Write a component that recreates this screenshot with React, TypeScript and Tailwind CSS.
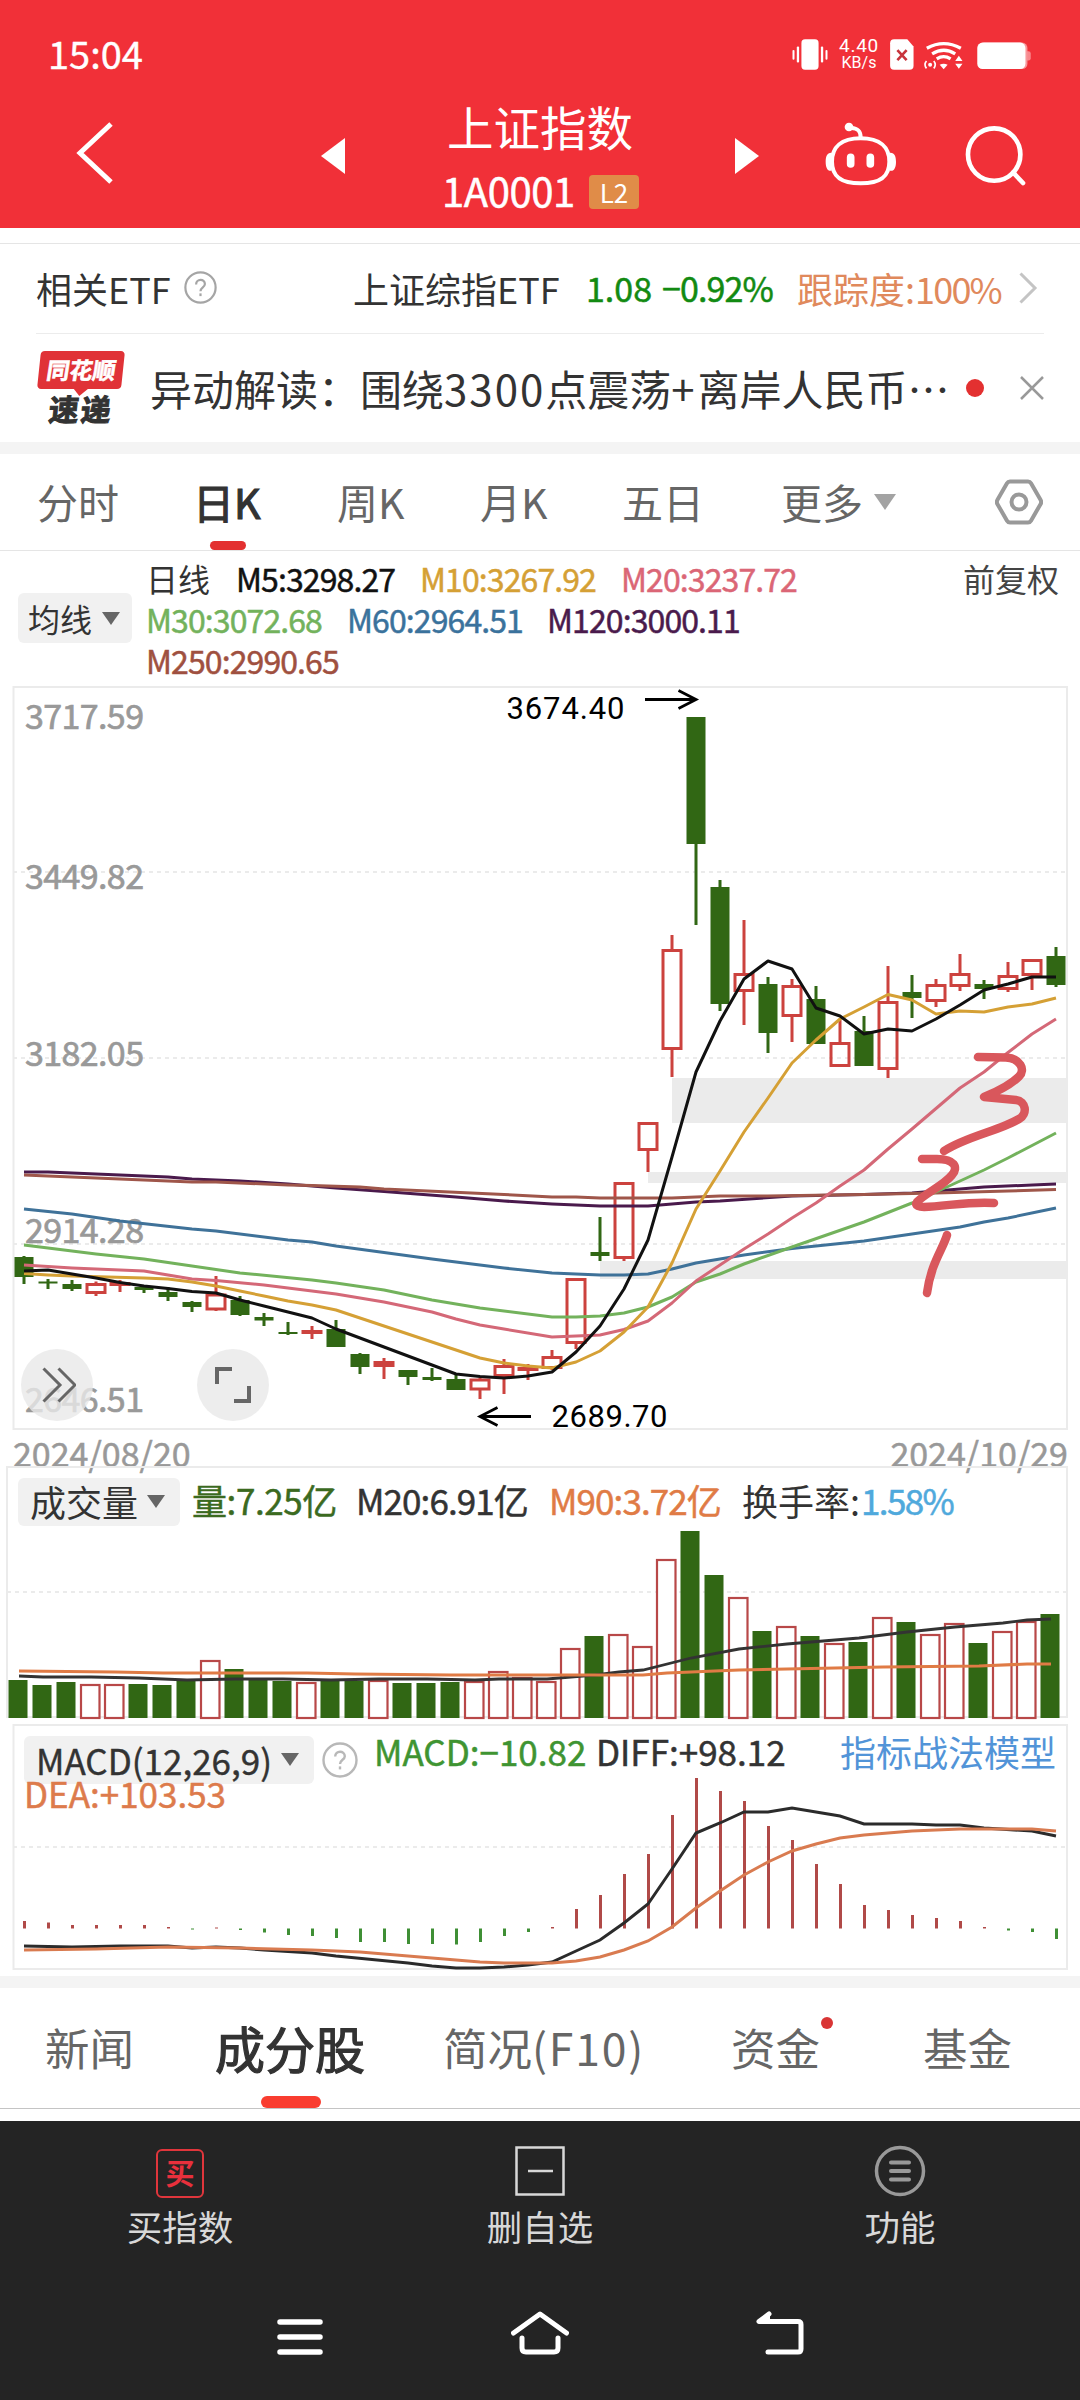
import type { ReactNode } from 'react';
import clsx from 'clsx';

type Candle = [kind: 'up' | 'down', top: number, bottom: number, high: number, low: number];
type Point = [index: number, y: number];

const UP = '#cc423e';
const DOWN = '#316714';
const STEP = 24;

const candles: Candle[] = [
    ['down', 1257, 1277, 1256, 1284],
    ['down', 1281.5, 1283.5, 1279, 1289],
    ['down', 1284, 1289, 1280, 1291],
    ['up', 1283, 1294, 1281.5, 1296],
    ['up', 1282, 1285, 1280, 1292],
    ['down', 1287, 1290, 1286, 1293],
    ['down', 1292, 1297, 1287, 1301],
    ['down', 1302, 1307, 1301, 1312],
    ['up', 1293.5, 1310.5, 1276, 1311],
    ['down', 1300, 1315, 1296, 1316],
    ['down', 1317, 1320.5, 1313, 1326],
    ['down', 1332, 1334, 1322, 1335],
    ['up', 1330, 1334, 1326, 1339],
    ['down', 1329, 1347, 1320, 1347],
    ['down', 1354, 1367, 1353, 1374],
    ['up', 1361, 1367, 1358, 1379],
    ['down', 1370, 1377, 1370, 1385],
    ['down', 1377, 1380, 1368, 1381],
    ['down', 1379, 1390, 1374, 1390],
    ['up', 1378.5, 1390.5, 1378, 1399],
    ['up', 1365, 1377, 1359, 1394],
    ['up', 1367, 1370, 1364, 1380],
    ['up', 1356, 1369, 1350, 1370],
    ['up', 1278, 1344, 1278, 1349],
    ['down', 1252, 1256, 1217, 1261],
    ['up', 1182, 1259, 1182, 1261],
    ['up', 1122, 1151, 1122, 1172],
    ['up', 949, 1050, 935, 1077],
    ['down', 717, 844, 717, 925],
    ['down', 887, 1004, 880, 1011],
    ['up', 973, 992, 920, 1025],
    ['down', 984, 1033, 977, 1053],
    ['up', 985, 1017, 979, 1042],
    ['down', 999, 1044, 986, 1044],
    ['up', 1042, 1067, 1020, 1067],
    ['down', 1031, 1066, 1016, 1066],
    ['up', 1001, 1070, 966, 1078],
    ['down', 992, 998, 975, 1018],
    ['up', 984, 1002, 979, 1007],
    ['up', 973, 987, 954, 991],
    ['down', 984, 989, 980, 999],
    ['up', 975, 990, 962, 992],
    ['up', 959, 976, 959, 990],
    ['down', 956, 985, 947, 987],
];

const averages: { color: string; points: Point[] }[] = [
    {
        color: '#3f7299',
        points: [[0, 1209], [2, 1214], [4, 1221], [7, 1229], [8, 1231], [11, 1240], [12, 1242], [13, 1246], [17, 1259], [20, 1268], [22, 1273], [24, 1275], [25, 1275], [26, 1274], [27, 1269], [28, 1263], [30, 1255], [32, 1248.5], [35, 1241], [37, 1234], [39, 1227], [40, 1222], [41, 1218], [43, 1208]],
    },
    {
        color: '#4a1a4c',
        points: [[0, 1172], [1, 1172], [4, 1175], [6, 1177], [7, 1179], [9, 1181], [11, 1184], [13, 1188], [15, 1191.5], [18, 1197], [20, 1201], [22, 1204], [24, 1206], [26, 1206], [28, 1202], [29, 1201], [32, 1196], [35, 1194.5], [37, 1193], [38, 1191], [40, 1187], [42, 1185], [43, 1184]],
    },
    {
        color: '#9f564a',
        points: [[0, 1175], [4, 1179], [7, 1182], [8, 1182], [11, 1185], [12, 1185.5], [14, 1187], [15, 1189], [20, 1194.5], [22, 1197], [23, 1197], [24, 1198], [27, 1198], [28, 1197], [29, 1196], [31, 1196], [35, 1194.5], [38, 1193], [41, 1191], [43, 1189.5]],
    },
    {
        color: '#73b25c',
        points: [[0, 1245], [1, 1248], [3, 1254], [5, 1259], [7, 1266], [9, 1273], [12, 1280], [13, 1283], [15, 1290], [17, 1300], [19, 1308], [22, 1317], [23, 1317], [24, 1316], [25, 1313], [26, 1307], [27, 1297], [28, 1282], [29, 1274], [30, 1264], [32, 1247], [35, 1222], [37, 1203], [38, 1192], [39, 1181], [40, 1170], [41, 1158], [43, 1133]],
    },
    {
        color: '#d46877',
        points: [[0, 1265], [2, 1268], [5, 1271], [6, 1275], [7, 1279], [8, 1280.5], [10, 1285], [12, 1291], [13, 1294], [15, 1302], [17, 1312], [18, 1319], [19, 1325], [20, 1329], [22, 1337], [23, 1336], [24, 1335], [25, 1329.5], [26, 1321], [27, 1303], [28, 1281], [30, 1249], [31, 1234], [32, 1218], [33, 1203], [34, 1186], [35, 1170], [36, 1149], [37, 1129], [38, 1108.5], [39, 1088], [40, 1072], [41, 1052.5], [42, 1034], [43, 1019]],
    },
    {
        color: '#d5a035',
        points: [[0, 1273.5], [1, 1275], [2, 1276], [5, 1278], [6, 1279], [7, 1282], [8, 1286], [9, 1291], [10, 1296], [11, 1301], [12, 1305], [13, 1310], [14, 1318], [15, 1326], [16, 1334], [17, 1342], [18, 1350], [19, 1358], [20, 1363], [21, 1366], [22, 1368], [23, 1362], [24, 1351], [25, 1332], [26, 1307], [27, 1263], [28, 1209], [29, 1171], [30, 1132], [31, 1098], [32, 1063], [33, 1040], [34, 1019], [35, 1007], [36, 994.5], [37, 1000], [38, 1014], [39, 1011], [40, 1012], [41, 1007], [42, 1004], [43, 998]],
    },
    {
        color: '#111111',
        points: [[0, 1271], [1, 1270], [2, 1274], [3, 1278], [4, 1282.5], [5, 1286], [6, 1288.5], [7, 1291.5], [8, 1293], [9, 1300], [10, 1306], [11, 1312], [12, 1318], [13, 1329], [14, 1338], [15, 1347], [16, 1356], [17, 1365], [18, 1374], [19, 1376.5], [20, 1378], [21, 1376], [22, 1372], [23, 1352], [24, 1326], [25, 1289], [26, 1240], [27, 1157], [28, 1072], [29, 1021], [30, 979], [31, 961], [32, 969], [33, 1008], [34, 1016], [35, 1034], [36, 1029], [37, 1031], [38, 1019], [39, 1005], [40, 990], [41, 984], [42, 977], [43, 977]],
    },
];

// top edge of each volume bar, baseline is 1718
const volumes = [
    1680, 1685, 1682, 1684, 1684, 1684, 1685, 1680, 1660, 1669, 1680, 1681, 1682, 1681, 1681, 1680, 1683, 1683, 1682, 1681, 1671, 1677,
    1681, 1648, 1636, 1634, 1646, 1559, 1531, 1575, 1597, 1631, 1626, 1636, 1643, 1642, 1617, 1622, 1634, 1623, 1643, 1631, 1621, 1614,
];
const volumeUp = [3, 4, 8, 12, 15, 19, 20, 21, 22, 23, 25, 26, 27, 30, 32, 34, 36, 38, 39, 41, 42];

const volumeM20: Point[] = [[0, 1676], [1, 1677], [3, 1677], [5, 1678], [7, 1680], [9, 1679], [11, 1679], [13, 1680], [15, 1679], [17, 1679], [19, 1680], [20, 1679], [22, 1679], [23, 1677], [24, 1675], [25, 1672], [26, 1670], [28, 1658], [30, 1649], [32, 1644], [33, 1642], [35, 1638], [37, 1632], [39, 1627], [41, 1623], [42, 1620], [43, 1619]];
const volumeM90: Point[] = [[0, 1671], [4, 1672], [6, 1673], [12, 1673], [14, 1674], [18, 1675], [26, 1675], [27, 1673], [30, 1670], [32, 1669], [36, 1667], [40, 1666], [42, 1664], [43, 1664]];

// end of each MACD stick, zero line is 1928.5
const sticks = [
    1921, 1922.5, 1925, 1925, 1925, 1925, 1927, 1929.5, 1927.5, 1930, 1932.5, 1935, 1936, 1938, 1942, 1942, 1944, 1944, 1944.5, 1942, 1936,
    1932, 1927, 1909, 1895, 1874, 1854, 1815, 1778, 1791, 1801, 1826, 1840, 1864, 1884, 1905, 1910, 1915, 1918, 1921, 1927, 1930.5, 1932, 1939,
];
const diff: Point[] = [[0, 1946], [2, 1947], [4, 1946], [6, 1946], [7, 1948], [8, 1947], [9, 1948], [10, 1950], [12, 1953], [13, 1956], [16, 1963], [17, 1966], [18, 1968], [19, 1968], [20, 1967], [21, 1965], [22, 1962], [23, 1951], [24, 1940], [25, 1923], [26, 1904], [27, 1869], [28, 1833], [29, 1823], [30, 1812], [31, 1812], [32, 1808], [33, 1812], [34, 1816], [35, 1824], [37, 1824], [38, 1825], [39, 1825], [40, 1828], [42, 1831], [43, 1836]];
const dea: Point[] = [[0, 1950], [3, 1949], [6, 1947], [9, 1948], [12, 1950], [14, 1952], [16, 1956], [18, 1960], [19, 1962], [20, 1963], [22, 1963], [23, 1961], [24, 1957], [25, 1950], [26, 1941], [27, 1927], [28, 1908], [29, 1891], [30, 1875], [31, 1862], [32, 1851], [33, 1844], [34, 1838], [35, 1835], [37, 1831], [39, 1829], [42, 1829], [43, 1831]];

const toPoints = (points: Point[], left: number) => points.map(([i, y]) => `${left + i * STEP},${y}`).join(' ');

// chart and its legend share one grid cell
const layer = 'col-start-1 row-start-1';

function Caret({ className }: { className?: string }) {
    return (
        <svg viewBox="0 0 18 13" className={clsx('shrink-0', className)} fill="currentColor">
            <path d="M0 0h18L9 13z" />
        </svg>
    );
}

function Help({ className }: { className?: string }) {
    return (
        <svg viewBox="0 0 36 36" className={clsx('shrink-0', className)} fill="none" stroke="currentColor" strokeWidth="2.4">
            <circle cx="18" cy="18" r="16.5" />
            <path d="M13.2 14.6c0-6.4 9.6-6.4 9.6-.4 0 3.6-4.8 3.6-4.8 7.8" />
            <path d="M18 24.4v3" />
        </svg>
    );
}

function Value({ className, children }: { className?: string; children: ReactNode }) {
    return <span className={clsx('shrink-0 [-webkit-text-stroke:0.5px]', className)}>{children}</span>;
}

function StatusBar() {
    return (
        <div className="flex h-[90px] items-center pt-[18px] pl-12">
            <span className="-mt-[3px] w-[744px] text-[38px] leading-none [-webkit-text-stroke:0.4px]">15:04</span>
            <svg viewBox="36 40 108 100" className="h-[33px] w-9" fill="#fff">
                <rect x="64" y="44" width="52" height="92" rx="11" />
                <rect x="37" y="76" width="6" height="30" rx="3" />
                <rect x="50" y="66" width="7" height="48" rx="3" />
                <rect x="123" y="66" width="7" height="48" rx="3" />
                <rect x="137" y="76" width="6" height="30" rx="3" />
            </svg>
            <div className="ml-[10px] flex w-[42px] flex-col items-center font-[Roboto]">
                <span className="text-[19px] leading-[18px] tracking-[0.7px]">4.40</span>
                <span className="text-[16px] leading-[16px]">KB/s</span>
            </div>
            <svg viewBox="333 40 72 100" className="ml-[10px] h-[33px] w-6">
                <path d="M345 44h40l19 22v58a12 12 0 0 1-12 12h-47a12 12 0 0 1-12-12V56a12 12 0 0 1 12-12z" fill="#fff" />
                <path d="M355 77l28 30M383 77l-28 30" stroke="#c8343c" strokeWidth="8" />
            </svg>
            <svg viewBox="433 40 120 100" className="ml-[9px] h-[33px] w-10" fill="none" stroke="#fff" strokeWidth="10">
                <path d="M444 71q51-28 103 0M460 88q36-22 70 0M474 103q21-13 42 0" />
                <path d="M483 121q12-6 24 0l-12 14z" fill="#fff" stroke="none" />
                <path d="M530 110h22l-11-16zM530 118h22l-11 15z" fill="#fff" stroke="none" />
                <circle cx="454" cy="121" r="6" fill="#fff" stroke="none" />
                <path d="M443 110q-9 11 0 22M465 110q9 11 0 22" strokeWidth="5" />
            </svg>
            <svg viewBox="595 40 162 100" className="ml-[14px] h-[33px] w-[54px]">
                <path d="M740 80h10a7 7 0 0 1 7 7v14a7 7 0 0 1-7 7h-10z" fill="#f8878c" />
                <rect x="600" y="54" width="147" height="80" rx="16" fill="#f8979b" />
                <rect x="595" y="54" width="146" height="80" rx="16" fill="#fff" />
            </svg>
        </div>
    );
}

function Header() {
    return (
        <header className="h-[228px] bg-[#f13038] text-white">
            <StatusBar />
            <div className="flex h-[138px] items-start pl-[74px]">
                <svg viewBox="0 0 40 64" className="mt-[31px] h-16 w-10" fill="none" stroke="#fff" strokeWidth="5">
                    <path d="M37 3L6 32l31 29" />
                </svg>
                <svg viewBox="0 0 24 36" className="mt-12 ml-[207px] h-9 w-6" fill="#fff">
                    <path d="M24 0v36L0 18z" />
                </svg>
                <div className="ml-[65px] flex w-[260px] flex-col items-center">
                    <h1 className="mt-[13px] text-[46.5px] leading-[46px]">上证指数</h1>
                    <div className="mt-[14px] flex h-[58px] w-[260px] items-center pl-8">
                        <span className="-mt-1 w-[147px] text-[40px] leading-none tracking-[-0.4px] [-webkit-text-stroke:0.5px]">1A0001</span>
                        <span className="flex h-[34px] w-[50px] items-center justify-center rounded bg-[#e08c48] text-[26px] leading-none">L2</span>
                    </div>
                </div>
                <svg viewBox="0 0 24 36" className="mt-12 ml-[65px] h-9 w-6" fill="#fff">
                    <path d="M0 0v36l24-18z" />
                </svg>
                <svg viewBox="136 292 216 198" className="mt-[31px] ml-[66px] h-[66px] w-[72px]" fill="none" stroke="#fff" strokeWidth="12">
                    <path d="M243 344c-58 0-86 26-86 70 0 42 24 65 86 65s86-23 86-65c0-44-28-70-86-70z" />
                    <path d="M243 342c0-20-8-28-28-29" strokeLinecap="round" />
                    <circle cx="208" cy="310" r="13" fill="#fff" stroke="none" />
                    <path d="M160 388c-16-4-22 8-22 26s6 30 18 27zM327 388c16-4 22 8 22 26s-6 30-18 27z" fill="#fff" stroke="none" />
                    <path d="M213 401v20M272 401v20" strokeWidth="23" strokeLinecap="round" />
                </svg>
                <svg viewBox="552 300 190 188" className="mt-[34px] ml-[67px] h-[63px] w-[63px]" fill="none" stroke="#fff" strokeWidth="14">
                    <circle cx="643" cy="391" r="79" />
                    <path d="M700 445l30 32" strokeLinecap="round" />
                </svg>
            </div>
        </header>
    );
}

function EtfRow() {
    return (
        <div className="mt-[15px] border-t border-[#e5e5e5] px-9">
            <div className="flex h-[90px] items-center border-b border-[#ececec] pb-0.5 text-[36px] leading-none text-[#333]">
                <span className="w-[148px] shrink-0">相关ETF</span>
                <Help className="h-[33px] w-[33px] text-[#a5a5a5]" />
                <span className="ml-[136px] w-[233px] shrink-0">上证综指ETF</span>
                <Value className="w-[76px] text-[34px] text-[#128a12]">1.08</Value>
                <Value className="w-[135px] text-[34px] tracking-[-0.9px] text-[#128a12]">−0.92%</Value>
                <span className="w-[222px] shrink-0 text-[#e0895c]">
                    跟踪度:<span className="tracking-[-1.8px]">100%</span>
                </span>
                <svg viewBox="0 0 19 32" className="h-8 w-[19px] shrink-0" fill="none" stroke="#c4c4c4" strokeWidth="3">
                    <path d="M1.5 1.5L16 16 1.5 30.5" />
                </svg>
            </div>
        </div>
    );
}

function NewsLogo() {
    return (
        <div className="flex h-[74px] w-[90px] shrink-0 flex-col items-center font-bold">
            <div className="relative flex h-[38px] w-[84px] -skew-x-6 items-center justify-center rounded bg-[#e03237] text-[23px] leading-none text-white">
                <span className="-mt-px -skew-x-3 [-webkit-text-stroke:0.6px]">同花顺</span>
                <svg viewBox="0 0 16 8" className="absolute top-[37px] left-[36px] h-2 w-4" fill="#e03237">
                    <path d="M0 0h16L7 8z" />
                </svg>
            </div>
            <span className="mt-[4px] -skew-x-6 text-[30px] leading-[30px] tracking-[2px] text-[#333] [-webkit-text-stroke:1px]">速递</span>
        </div>
    );
}

function NewsRow() {
    return (
        <div className="flex h-[108px] items-center pl-9 text-[#333]">
            <NewsLogo />
            <span className="ml-6 w-[816px] shrink-0 text-[42px] leading-none whitespace-nowrap">
                异动解读：围绕<span className="tracking-[2px]">3300</span>点震荡<span className="tracking-[3px]">+</span>离岸人民币…
            </span>
            <span className="h-[18px] w-[18px] rounded-full bg-[#e33030]" />
            <svg viewBox="0 0 24 24" className="ml-9 h-6 w-6" stroke="#999" strokeWidth="2.5">
                <path d="M1 1l22 22M23 1L1 23" />
            </svg>
        </div>
    );
}

function PeriodTabs() {
    const tabs = [
        { name: '分时', width: 'w-[156px]' },
        { name: '日K', width: 'w-[144px]', active: true },
        { name: '周K', width: 'w-[143px]' },
        { name: '月K', width: 'w-[142px]' },
        { name: '五日', width: 'w-[159px]' },
        { name: '更多', width: 'w-[90px]' },
    ];

    return (
        <div className="flex h-[97px] items-stretch border-b border-[#e5e5e5] pl-[37px] text-[41px] leading-none text-[#666]">
            {tabs.map((tab) => (
                <div key={tab.name} className={clsx('flex shrink-0 flex-col', tab.width)}>
                    <span className={clsx('mt-[27px] h-[60px]', tab.active && 'text-[#333] [-webkit-text-stroke:1.2px]')}>{tab.name}</span>
                    {tab.active && <span className="ml-[17px] h-[9px] w-9 rounded-full bg-[#e33030]" />}
                </div>
            ))}
            <Caret className="mt-[39px] ml-[3px] h-[18px] w-[22px] text-[#a3a3a3]" />
            <svg viewBox="0 0 48 46" className="mt-[25px] ml-[99px] h-[46px] w-12" fill="none" stroke="#999" strokeWidth="4">
                <path d="M15 2.5h18q2 0 3 1.800l9.500 16.500q1.300 2.200 0 4.400L36 41.700q-1 1.800-3 1.800H15q-2 0-3-1.800L2.500 25.200q-1.300-2.200 0-4.400L12 4.300q1-1.800 3-1.800z" />
                <circle cx="24" cy="23" r="7.500" />
            </svg>
        </div>
    );
}

function AverageLegend() {
    return (
        <div className="flex h-[135px] items-start pl-[18px] text-[32px] leading-[41px]">
            <button className="mt-[42px] flex h-[50px] w-[114px] shrink-0 items-center rounded-md bg-[#f1f1f1] pl-[10px] text-[#333]">
                <span className="w-[74px] text-left">均线</span>
                <Caret className="h-[13px] w-[18px] text-[#666]" />
            </button>
            <div className="ml-[14px] w-[817px] pt-[7px] tracking-[-0.9px]">
                <div className="flex">
                    <span className="w-[90px] shrink-0 tracking-normal text-[#333]">日线</span>
                    <Value className="w-[184px] text-[#111]">M5:3298.27</Value>
                    <Value className="w-[201px] text-[#d5a035]">M10:3267.92</Value>
                    <Value className="text-[#db6676]">M20:3237.72</Value>
                </div>
                <div className="flex">
                    <Value className="w-[201px] text-[#73b25c]">M30:3072.68</Value>
                    <Value className="w-[200px] text-[#3a729c]">M60:2964.51</Value>
                    <Value className="text-[#4a1a4c]">M120:3000.11</Value>
                </div>
                <div className="flex">
                    <Value className="text-[#9f5040]">M250:2990.65</Value>
                </div>
            </div>
            <span className="pt-[7px] text-[#444]">前复权</span>
        </div>
    );
}

function CandleShape({ candle, x }: { candle: Candle; x: number }) {
    const [kind, top, bottom, high, low] = candle;

    if (kind === 'down') {
        return (
            <g fill={DOWN}>
                <rect x={x - 1.5} y={high} width="3" height={low - high} />
                <rect x={x - 9.5} y={top} width="19" height={bottom - top} />
            </g>
        );
    }

    const body = Math.max(bottom - top - 3, 1);
    return (
        <g fill="none" stroke={UP} strokeWidth="3">
            <path d={`M${x} ${high}V${top + 1}M${x} ${bottom - 1}V${low}`} />
            <rect x={x - 9} y={top + 1.5} width="18" height={body} />
        </g>
    );
}

function CandleChart() {
    const labels = [
        { y: 729, text: '3717.59' },
        { y: 889, text: '3449.82' },
        { y: 1066, text: '3182.05' },
        { y: 1243, text: '2914.28' },
        { y: 1412, text: '2646.51' },
    ];

    return (
        <div className="relative h-[745px]">
            <svg viewBox="0 686 1080 745" className="block h-[745px] w-full" fill="none">
                <rect x="13.500" y="687" width="1053.500" height="742" stroke="#ebebeb" strokeWidth="2" />
                <g fill="#ebebeb">
                    <rect x="672" y="1078" width="396" height="45" />
                    <rect x="648" y="1172" width="420" height="11" />
                    <rect x="600" y="1261" width="468" height="18" />
                </g>
                <path d="M13 872H1066M13 1058H1066M13 1244H1066" stroke="#ebebeb" strokeWidth="2" strokeDasharray="4 4" />
                {candles.map((candle, i) => (
                    <CandleShape key={i} candle={candle} x={24 + i * STEP} />
                ))}
                <g fill="#999" fontSize="34" stroke="#999" strokeWidth="0.7">
                    {labels.map((label) => (
                        <text key={label.text} x="25" y={label.y} textLength="119">
                            {label.text}
                        </text>
                    ))}
                </g>
                {averages.map((line) => (
                    <polyline key={line.color} points={toPoints(line.points, 24)} stroke={line.color} strokeWidth="3" strokeLinejoin="round" />
                ))}
                <path d="M645 699.500H696M678.500 690.500L696 699.500 678.500 708.500M531 1416.500H480M497.500 1407.500L480 1416.500 497.500 1425.500" stroke="#000" strokeWidth="2.800" />
                <g fill="#000" fontFamily="Roboto" fontSize="31">
                    <text x="506.500" y="718.500" textLength="118">
                        3674.40
                    </text>
                    <text x="551.500" y="1427" textLength="116">
                        2689.70
                    </text>
                </g>
                {/* hand-drawn gap marks */}
                <g stroke="#d9575c" strokeWidth="8.500" strokeLinecap="round" strokeLinejoin="round">
                    <path d="M978 1057l28 .5c14 1 20 12 13 19-8 8-24 16-35 20.500l32 3c10 1 12 14 3 19-20 12-52 17-75 32" />
                    <path d="M922 1159h15c17 0 22 8 15 16-9 11-25 17-35 27-3 4 3 5 7 5 23-1 48-6 70-4" />
                    <path d="M947 1235c-4 14-16 28-20 58" />
                </g>
            </svg>
            <button className="absolute top-[663px] left-[21px] flex h-[72px] w-[72px] items-center justify-center rounded-full bg-[#e8e8e8]/80">
                <svg viewBox="0 0 34 36" className="ml-[3px] h-9 w-[34px]" fill="none" stroke="#666" strokeWidth="3">
                    <path d="M1.500 1.500L18 18 1.500 34.500M16.500 1.500L33 18 16.500 34.500" />
                </svg>
            </button>
            <button className="absolute top-[663px] left-[197px] flex h-[72px] w-[72px] items-center justify-center rounded-full bg-[#e8e8e8]/80">
                <svg viewBox="0 0 36 36" className="h-9 w-9" fill="none" stroke="#666" strokeWidth="4">
                    <path d="M17 2H2v15M34 19v15H19" />
                </svg>
            </button>
        </div>
    );
}

function VolumeChart() {
    return (
        <div className="grid h-[257px]">
            <svg viewBox="0 1466 1080 257" className={clsx('block h-[257px] w-full', layer)} fill="none">
                <rect x="7" y="1467" width="1060" height="250" stroke="#ebebeb" strokeWidth="2" />
                <path d="M7 1592H1066" stroke="#ebebeb" strokeWidth="2" strokeDasharray="4 4" />
                {volumes.map((top, i) => {
                    const x = 18 + i * STEP;
                    return volumeUp.includes(i) ? (
                        <rect key={i} x={x - 9} y={top + 1} width="18.500" height={1717 - top} fill="#fff" stroke="#b84848" strokeWidth="2.200" />
                    ) : (
                        <rect key={i} x={x - 9.500} y={top} width="19" height={1718 - top} fill={DOWN} />
                    );
                })}
                <polyline points={toPoints(volumeM20, 19)} stroke="#333" strokeWidth="2.800" />
                <polyline points={toPoints(volumeM90, 19)} stroke="#e07b45" strokeWidth="3" />
            </svg>
            <div className={clsx('mt-[12px] flex h-12 items-center self-start pl-[18px] text-[35px] leading-none tracking-[-0.9px] text-[#333]', layer)}>
                <button className="flex h-12 w-[162px] shrink-0 items-center rounded-md bg-[#f1f1f1] pb-0.5 pl-3 text-[36px] tracking-normal">
                    <span className="w-[117px] text-left">成交量</span>
                    <Caret className="h-[13px] w-[18px] text-[#666]" />
                </button>
                <Value className="-mt-[5px] ml-3 w-[164px] tracking-[-0.4px] text-[#3b6a1f]">量:7.25亿</Value>
                <Value className="-mt-[5px] w-[193px]">M20:6.91亿</Value>
                <Value className="-mt-[5px] w-[193px] text-[#e07b45]">M90:3.72亿</Value>
                <span className="-mt-[5px] w-[119px] shrink-0 text-[36px] tracking-normal">换手率:</span>
                <Value className="-mt-[5px] tracking-[-1.6px] text-[#4fa9dc]">1.58%</Value>
            </div>
        </div>
    );
}

function MacdChart() {
    return (
        <div className="grid h-[253px]">
            <svg viewBox="0 1723 1080 253" className={clsx('block h-[253px] w-full', layer)} fill="none">
                <rect x="13.500" y="1725" width="1053.500" height="244" stroke="#ebebeb" strokeWidth="2" />
                <path d="M13 1847H1066" stroke="#ebebeb" strokeWidth="2" strokeDasharray="4 4" />
                {sticks.map((end, i) => (
                    <path key={i} d={`M${24.500 + i * STEP} 1928.500V${end}`} stroke={end < 1928.5 ? '#b04a48' : '#3f8f35'} strokeWidth="3" />
                ))}
                <polyline points={toPoints(diff, 24)} stroke="#2b2b2b" strokeWidth="3" />
                <polyline points={toPoints(dea, 24)} stroke="#d97b50" strokeWidth="3" />
            </svg>
            <div className={clsx('self-start pl-6 text-[35px] leading-none text-[#333]', layer)}>
                <div className="flex h-[61px] items-start pt-[13px]">
                    <button className="flex h-12 w-[290px] shrink-0 items-center rounded-md bg-[#f1f1f1] pb-0.5 pl-3">
                        <span className="w-[245px] text-left [-webkit-text-stroke:0.4px]">MACD(12,26,9)</span>
                        <Caret className="h-[13px] w-[18px] text-[#666]" />
                    </button>
                    <Help className="mt-1.5 ml-2 h-9 w-9 text-[#b8b8b8]" />
                    <Value className="-mt-[3px] ml-4 w-[222px] text-[#3f9432]">MACD:−10.82</Value>
                    <Value className="-mt-[3px] w-[244px]">DIFF:+98.12</Value>
                    <span className="-mt-[3px] text-[36px] text-[#5294d8]">指标战法模型</span>
                </div>
                <Value className="-mt-[9px] block text-[#dd7b4c]">DEA:+103.53</Value>
            </div>
        </div>
    );
}

function InfoTabs() {
    return (
        <div className="flex h-[121px] items-start border-b border-[#c4c4c4] pl-[45px] text-[44.5px] leading-none text-[#666]">
            <span className="mt-[37px] w-[170px] shrink-0">新闻</span>
            <div className="flex h-full w-[228px] shrink-0 flex-col">
                <span className="mt-[34px] h-[74px] text-[50px] text-[#333] [-webkit-text-stroke:1.2px]">成分股</span>
                <span className="ml-[46px] h-3 w-[60px] rounded-full bg-[#f93d30]" />
            </div>
            <span className="mt-[37px] w-[288px] shrink-0">
                简况<span className="tracking-[1.8px]">(F10)</span>
            </span>
            <div className="relative mt-[37px] w-[192px] shrink-0">
                资金
                <span className="absolute -top-[8px] left-[90px] h-3 w-3 rounded-full bg-[#d93535]" />
            </div>
            <span className="mt-[37px]">基金</span>
        </div>
    );
}

function ActionBar() {
    return (
        <div className="grid h-[162px] grid-cols-3 pt-6 text-[35.5px] leading-none text-[#d8d8d8]">
            <div className="flex flex-col items-center">
                <div className="mt-[4px] flex h-[49px] w-12 items-center justify-center rounded-md border-[2.5px] border-[#e0363c] pb-0.5 text-[29px] leading-none font-bold text-[#e8303c]">
                    买
                </div>
                <span className="mt-[10px]">买指数</span>
            </div>
            <div className="flex flex-col items-center">
                <svg viewBox="0 0 50 50" className="mt-[1px] h-[50px] w-[50px]" fill="none" stroke="#d8d8d8" strokeWidth="2.500">
                    <path d="M1.500 1.500h47v47h-47zM13 25h25" />
                </svg>
                <span className="mt-[12px]">删自选</span>
            </div>
            <div className="flex flex-col items-center">
                <svg viewBox="0 0 52 52" className="h-[52px] w-[52px]" fill="none" stroke="#999" strokeWidth="4">
                    <circle cx="26" cy="26" r="23.500" strokeWidth="3.500" />
                    <path d="M17 17.500h18M17 26h18M17 34.500h18" strokeLinecap="round" />
                </svg>
                <span className="mt-[11px]">功能</span>
            </div>
        </div>
    );
}

function SystemNav() {
    return (
        <div className="flex h-[117px] items-start pt-[28px] pl-[277px]">
            <svg viewBox="0 0 46 44" className="h-11 w-[46px]" stroke="#fff" strokeWidth="5.500" strokeLinecap="round">
                <path d="M3 11h40M3 26h40M3 41h40" />
            </svg>
            <svg viewBox="0 0 58 44" className="ml-[188px] h-11 w-[58px]" fill="none" stroke="#fff" strokeWidth="5" strokeLinecap="round" strokeLinejoin="round">
                <path d="M2.500 22L29 3l26.500 19M11 27v10q0 4 4 4h28q4 0 4-4V27" />
            </svg>
            <svg viewBox="0 0 48 44" className="ml-[187px] h-11 w-12" fill="none" stroke="#fff" strokeWidth="5" strokeLinejoin="round" strokeLinecap="round">
                <path d="M13 3L3 10.500h39q3 0 3 3V38q0 3-3 3H12" />
                <path d="M13 3v7H4z" fill="#fff" strokeWidth="2" />
            </svg>
        </div>
    );
}

export default function App() {
    return (
        <div className="h-[2400px] w-[1080px] overflow-hidden bg-white font-['Noto_Sans_CJK_SC',sans-serif] whitespace-nowrap">
            <Header />
            <EtfRow />
            <NewsRow />
            <div className="h-3 bg-[#f4f4f4]" />
            <PeriodTabs />
            <AverageLegend />
            <CandleChart />
            <div className="flex h-[35px] items-start justify-between pt-1 pr-3 pl-[13px] text-[34px] leading-[35px] text-[#999]">
                <Value>2024/08/20</Value>
                <Value>2024/10/29</Value>
            </div>
            <VolumeChart />
            <MacdChart />
            <div className="h-3 bg-[#f4f4f4]" />
            <InfoTabs />
            <div className="mt-3 h-[279px] bg-[#242424]">
                <ActionBar />
                <SystemNav />
            </div>
        </div>
    );
}
